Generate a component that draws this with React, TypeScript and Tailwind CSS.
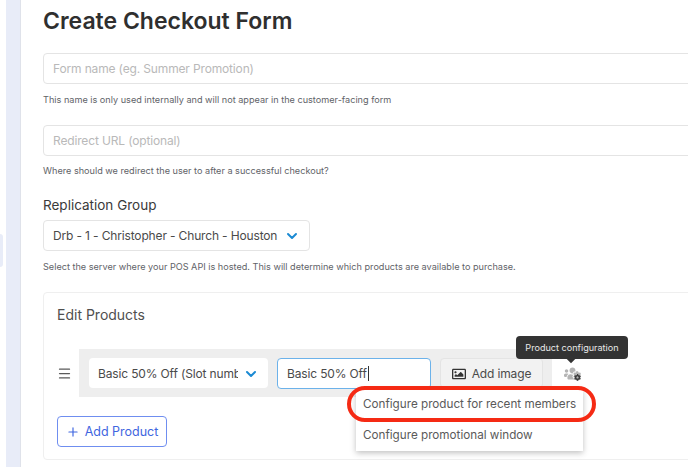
import { ChevronDown, Menu, Plus } from 'lucide-react';
import { FaCog, FaRegImage, FaUsersCog } from 'react-icons/fa';

const font = { fontFamily: 'Inter, "Liberation Sans", sans-serif' };

function Hint({ children }: { children: string }) {
  return <p className="text-[9.15px] leading-[12px] text-[#5f6368] whitespace-nowrap">{children}</p>;
}

export default function App() {
  return (
    <div style={font} className="flex h-[467px] w-[688px] overflow-hidden bg-white text-[#2f2f2f]">
      <div className="w-[6px] shrink-0 bg-white pt-[234px]">
        <div className="h-[33px] w-[3px] rounded-r bg-[#e8ecf8]" />
      </div>
      <div className="w-[15px] shrink-0 border-r border-[#dfe2ea] bg-[#e8ecf8]" />
      <div className="w-[700px] shrink-0 pl-[22px] pt-[7px]">
        <h1 className="text-[23px] font-semibold leading-[29px]">Create Checkout Form</h1>

        <div className="mt-[17px] flex h-[31px] items-center rounded border border-[#e4e4e4] px-[9px] text-[12px] tracking-[-0.15px] text-[#b9b9b9]">
          Form name (eg. Summer Promotion)
        </div>
        <div className="mt-[10px]"><Hint>This name is only used internally and will not appear in the customer-facing form</Hint></div>

        <div className="mt-[19px] flex h-[31px] items-center rounded border border-[#e4e4e4] px-[9px] text-[12px] tracking-[-0.15px] text-[#b9b9b9]">
          Redirect URL (optional)
        </div>
        <div className="mt-[9px]"><Hint>Where should we redirect the user to after a successful checkout?</Hint></div>

        <div className="mt-[20px] text-[13.5px] leading-[16px] text-[#3a3a3a]">Replication Group</div>
        <div className="mt-[7px] flex h-[31px] w-[267px] items-center justify-between rounded border border-[#e4e4e4] pl-[9px] pr-[9px] text-[12px] tracking-[-0.15px] text-[#4a4a4a]">
          <span className="whitespace-nowrap">Drb - 1 - Christopher - Church - Houston</span>
          <ChevronDown size={16} strokeWidth={3} className="text-[#1b8ad3]" />
        </div>
        <div className="mt-[10px]"><Hint>Select the server where your POS API is hosted. This will determine which products are available to purchase.</Hint></div>

        <div className="mt-[19px] h-[168px] rounded border border-[#efefef] pl-[13px] pt-[12px]">
          <div className="text-[14px] leading-[19px] text-[#4f4f4f]">Edit Products</div>

          <div className="mt-[25px] flex items-center">
            <Menu size={15} className="mr-[7px] text-[#5a5a5a]" />
            <div className="flex h-[48px] w-[473px] items-center gap-[9px] bg-[#eeeeee] pl-[10px]">
              <div className="flex h-[30px] w-[179px] items-center justify-between rounded bg-white pl-[9px] pr-[9px] pt-px text-[12px] tracking-[-0.15px] text-[#4a4a4a]">
                <span className="w-[140px] overflow-hidden whitespace-nowrap">Basic 50% Off (Slot numb</span>
                <ChevronDown size={16} strokeWidth={3} className="text-[#1b8ad3]" />
              </div>
              <div className="flex h-[31px] w-[154px] items-center rounded border border-[#6cb2ea] bg-white pl-[9px] pt-px text-[12px] tracking-[-0.15px] text-[#4a4a4a]">
                Basic 50% Off<span className="ml-px h-[15px] w-px bg-[#333333]" />
              </div>
              <div className="flex h-[30px] w-[103px] items-center justify-center gap-[6px] rounded border border-[#e4e4e4] bg-[#f2f2f2] pt-px text-[12px] tracking-[-0.15px] text-[#4a4a4a]">
                <FaRegImage size={14} className="text-[#333333]" />
                Add image
              </div>
            </div>
            <div className="relative ml-[12px]">
              <FaUsersCog size={17} className="text-[#b4b4b4]" />
              <FaCog size={7} className="absolute bottom-[1px] right-0 text-[#3c3c3c]" />
            </div>
          </div>

          <div className="mt-[19px] flex h-[31px] w-[110px] items-center justify-center gap-[5px] rounded border border-[#6f8ef0] pt-px text-[12.5px] text-[#3f66e0]">
            <Plus size={14} />
            Add Product
          </div>
        </div>
      </div>

      <div className="absolute left-[516px] top-[336px] flex h-[23px] w-[112px] items-center justify-center rounded-sm bg-[#333333] text-[9.1px] text-[#e8e8e8]">
        Product configuration
        <div className="absolute left-[52px] top-[20px] h-[6px] w-[6px] rotate-45 bg-[#333333]" />
      </div>

      <div className="absolute left-[356px] top-[389px] w-[227px] bg-white text-[11.7px] text-[#5a5a5a] shadow-[0_2px_6px_rgba(0,0,0,0.25)]">
        <div className="flex h-[31px] items-center whitespace-nowrap pl-[7px]">Configure product for recent members</div>
        <div className="flex h-[31px] items-center whitespace-nowrap pl-[7px]">Configure promotional window</div>
      </div>
      <div className="absolute left-[347px] top-[386px] h-[36px] w-[249px] rounded-[18px] border-[4px] border-[#f52a14]" />
    </div>
  );
}
